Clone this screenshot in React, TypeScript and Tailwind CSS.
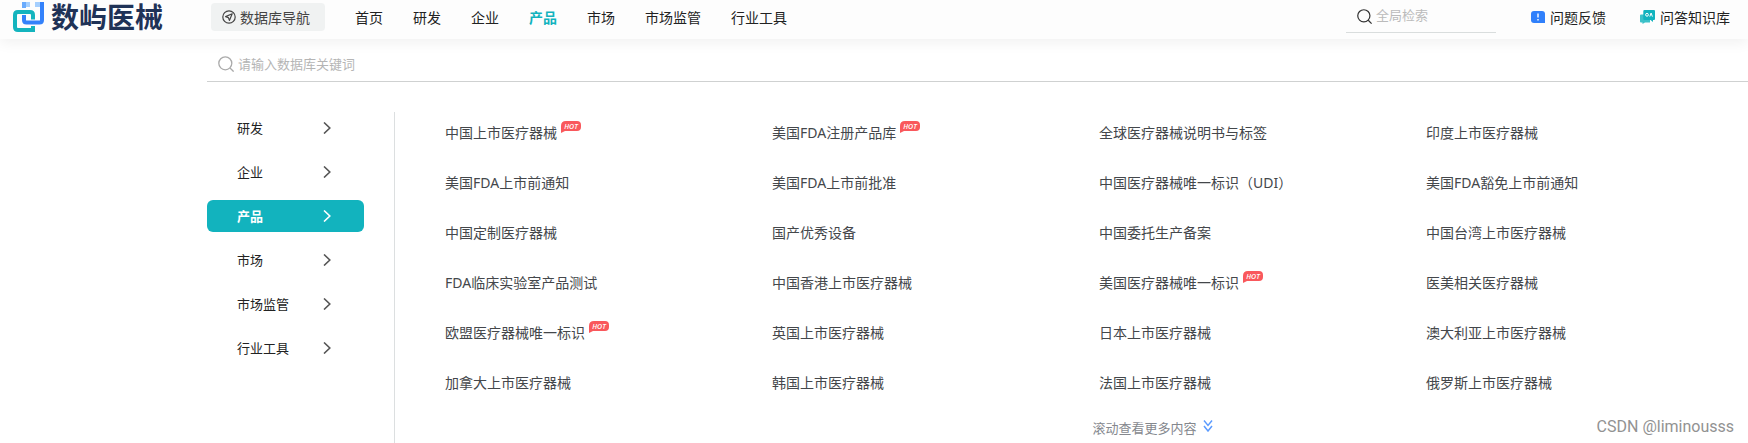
import clsx from "clsx"

type Product = { name: string; hot?: boolean }

const NAV = ["首页", "研发", "企业", "产品", "市场", "市场监管", "行业工具"]
const CATEGORIES = ["研发", "企业", "产品", "市场", "市场监管", "行业工具"]
const ACTIVE = "产品"

const PRODUCTS: Product[] = [
  { name: "中国上市医疗器械", hot: true },
  { name: "美国FDA注册产品库", hot: true },
  { name: "全球医疗器械说明书与标签" },
  { name: "印度上市医疗器械" },
  { name: "美国FDA上市前通知" },
  { name: "美国FDA上市前批准" },
  { name: "中国医疗器械唯一标识（UDI）" },
  { name: "美国FDA豁免上市前通知" },
  { name: "中国定制医疗器械" },
  { name: "国产优秀设备" },
  { name: "中国委托生产备案" },
  { name: "中国台湾上市医疗器械" },
  { name: "FDA临床实验室产品测试" },
  { name: "中国香港上市医疗器械" },
  { name: "美国医疗器械唯一标识", hot: true },
  { name: "医美相关医疗器械" },
  { name: "欧盟医疗器械唯一标识", hot: true },
  { name: "英国上市医疗器械" },
  { name: "日本上市医疗器械" },
  { name: "澳大利亚上市医疗器械" },
  { name: "加拿大上市医疗器械" },
  { name: "韩国上市医疗器械" },
  { name: "法国上市医疗器械" },
  { name: "俄罗斯上市医疗器械" },
]

export default function App() {
  return (
    <div className="relative flex min-h-screen flex-col bg-white font-['Noto_Sans','Noto_Sans_CJK_SC',sans-serif] text-[#222]">
      <Header />

      <main className="flex grow flex-col pl-[207px]">
        <label className="flex h-[43px] items-center gap-1 border-b border-[#cfd1d1] pt-2 pl-[11px]">
          <SearchIcon className="size-4 shrink-0 text-[#aaa]" />
          <input
            type="search"
            aria-label="数据库关键词"
            placeholder="请输入数据库关键词"
            className="h-8 grow bg-transparent text-[13px] outline-none placeholder:text-[#b5b5b5]"
          />
        </label>

        <div className="mt-[30px] flex grow">
          <Sidebar />
          <section className="grow border-l border-[#dcdfe0] pr-[19px] pl-[50px]">
            <ul className="grid grid-cols-4 gap-x-6">
              {PRODUCTS.map(p => (
                <li key={p.name} className="flex h-[50px] items-center pb-2 text-[14px] leading-5">
                  <a href="#" className="flex items-center gap-1 whitespace-nowrap text-[#44474b]">
                    {p.name}
                    {p.hot && <HotBadge />}
                  </a>
                </li>
              ))}
            </ul>
            <p className="flex items-center justify-center gap-1.5 pt-1.5 pl-[131px] text-[13px] leading-5 text-[#85888e]">
              滚动查看更多内容
              <DoubleChevron />
            </p>
          </section>
        </div>
      </main>

      <span className="absolute right-[14px] bottom-1 font-[Roboto,sans-serif] text-[16px] leading-6 text-[#929292]">
        CSDN @liminousss
      </span>
    </div>
  )
}

function Header() {
  return (
    <header className="flex h-[39px] items-start bg-[#fdfdfd] pr-[18px] pl-[13px] text-[14px] whitespace-nowrap shadow-[0_4px_14px_rgba(0,0,0,0.06)]">
      <a href="#" className="flex w-[198px] items-start gap-[7px] pt-0.5">
        <LogoMark />
        <span className="text-[28px] leading-[30px] font-bold text-[#1f3257]">数屿医械</span>
      </a>

      <button type="button" className="mt-[3px] flex h-7 items-center gap-1 rounded-[4px] bg-[#f0f2f2] pr-[15px] pl-[11px] text-[#444]">
        <CompassIcon />
        数据库导航
      </button>

      <nav className="flex h-[35px] items-center gap-[30px] pl-[30px]">
        {NAV.map(item => (
          <a key={item} href="#" className={clsx(item === ACTIVE && "font-bold text-[#12b3be]")}>
            {item}
          </a>
        ))}
      </nav>

      <label className="ml-auto flex h-[33px] w-[150px] items-center gap-1 border-b border-[#d9dddd] pl-[11px]">
        <SearchIcon className="size-[15px] shrink-0 text-[#333]" />
        <input
          type="search"
          aria-label="全局检索"
          placeholder="全局检索"
          className="w-full min-w-0 bg-transparent text-[13px] outline-none placeholder:text-[#bbb]"
        />
      </label>
      <a href="#" className="ml-[35px] flex h-[34px] items-center gap-[5px]">
        <FeedbackIcon />
        问题反馈
      </a>
      <a href="#" className="ml-[34px] flex h-[34px] items-center gap-[5px]">
        <QaIcon />
        问答知识库
      </a>
    </header>
  )
}

function Sidebar() {
  return (
    <nav className="mr-[30px] flex w-[157px] shrink-0 flex-col gap-3 text-[13px]">
      {CATEGORIES.map(item => (
        <a
          key={item}
          href="#"
          className={clsx(
            "flex h-8 items-center justify-between rounded-[6px] pr-[33px] pl-[30px]",
            item === ACTIVE && "bg-[#12b3be] font-bold text-white"
          )}
        >
          <span className="pt-0.5">{item}</span>
          <svg viewBox="0 0 8 12" className={clsx("h-3 w-2", item !== ACTIVE && "text-[#555]")} fill="none" stroke="currentColor" strokeWidth="1.6">
            <path d="M1 .5 6.8 6 1 11.5" />
          </svg>
        </a>
      ))}
    </nav>
  )
}

// speech-bubble shape: rounded bar with a small tail at the lower left
function HotBadge() {
  return (
    <svg viewBox="0 0 20 12" className="mb-3 h-3 w-5">
      <path d="M5 0h11q4 0 4 4v2q0 4-4 4H4L0 12V5q0-5 5-5z" fill="#f9585c" />
      <text x="10" y="7.800" textAnchor="middle" fill="#fff" className="font-['Open_Sans',sans-serif] text-[7px] font-semibold italic">
        HOT
      </text>
    </svg>
  )
}

function SearchIcon({ className }: { className: string }) {
  return (
    <svg viewBox="0 0 16 16" className={className} fill="none" stroke="currentColor" strokeWidth="1.3">
      <circle cx="7.3" cy="7.3" r="6.5" />
      <path d="m12 12 3.6 3.6" />
    </svg>
  )
}

function CompassIcon() {
  return (
    <svg viewBox="0 0 14 14" className="size-[14px]" fill="none" stroke="currentColor" strokeWidth="1.2">
      <circle cx="7" cy="7" r="6.2" />
      <path d="M10.2 3.8 3.6 6.6l2.8 1 1 2.8z" strokeLinejoin="round" />
    </svg>
  )
}

function LogoMark() {
  return (
    <svg viewBox="0 0 31 30" className="h-[30px] w-[31px]" fill="none" strokeWidth="4">
      <path d="M11 13v5q0 2.500 2.500 2.500h13q2.500 0 2.500-2.500V0" stroke="#3482fb" />
      <path d="M9 0h4v6H9z" fill="#6aabfd" />
      <path d="M13 0h4v5h-4zM22 0h5v5h-5z" fill="#a5cffe" />
      <path d="M20 17.500V13q0-3-3-3H5q-3 0-3 3v12q0 3 3 3h15v-4" stroke="#14b4be" />
    </svg>
  )
}

function FeedbackIcon() {
  return (
    <svg viewBox="0 0 14 12" className="h-3 w-[14px]">
      <path d="M3 0h8q3 0 3 3v9H3q-3 0-3-3V3q0-3 3-3z" fill="#3080fb" />
      <path d="M7 2.5v4M7 8v1.5" stroke="#fff" strokeWidth="1.4" />
    </svg>
  )
}

function QaIcon() {
  return (
    <svg viewBox="0 0 15 14" className="h-[14px] w-[15px]">
      <path d="M1 4.500h9v8H5L2.500 14v-1.500H1q-1 0-1-1v-6q0-1 1-1z" fill="#3cc1c9" />
      <path d="M4.500 0H14q1 0 1 1v8q0 1-1 1h-1v2l-2.500-2h-6q-1.200 0-1.200-1V1q0-1 1.200-1z" fill="#12b3be" />
      <circle cx="7" cy="4.800" r="1.400" fill="none" stroke="#fff" />
      <path d="m9.800 6.600 1.300-3.600 1.300 3.600" fill="none" stroke="#fff" />
    </svg>
  )
}

function DoubleChevron() {
  return (
    <svg viewBox="0 0 10 12" className="mb-1 h-3 w-[10px]" fill="none" stroke="#5b9bff" strokeWidth="1.500">
      <path d="m1 .6 4 4.800 4-4.800M1 6l4 5 4-5" />
    </svg>
  )
}
